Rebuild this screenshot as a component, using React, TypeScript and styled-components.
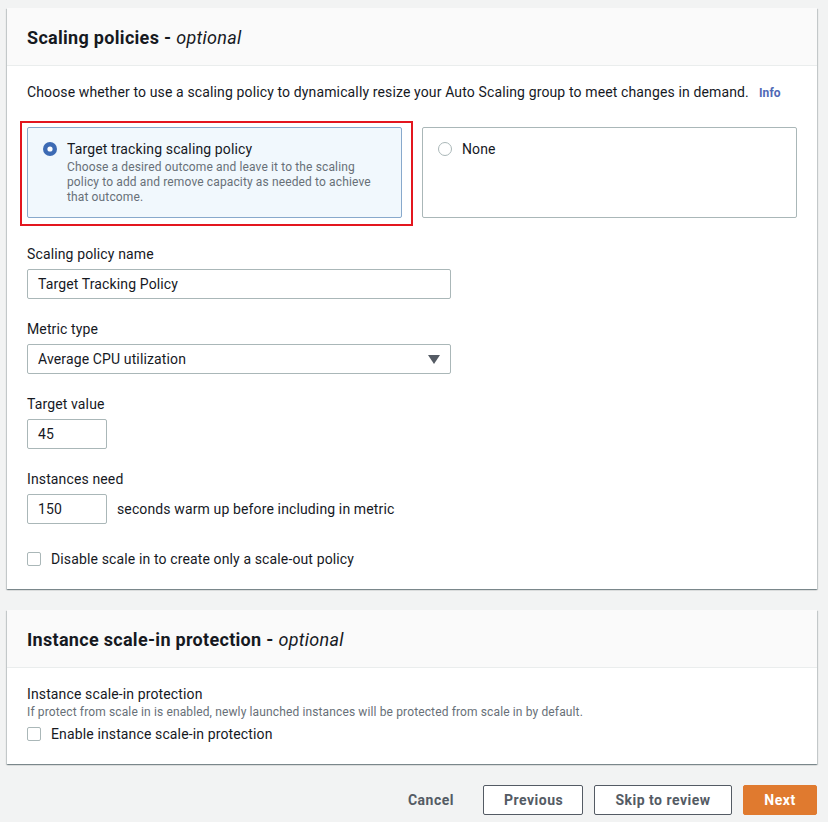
import React from "react";
import styled, { createGlobalStyle } from "styled-components";

const Global = createGlobalStyle`
  html, body { margin: 0; padding: 0; background: #f2f3f3; }
  body { font-family: Roboto, "Noto Sans", Arial, sans-serif; color: #16191f; letter-spacing: 0.13px; }
  * { box-sizing: border-box; }
`;

const Page = styled.div`
  width: 828px;
  padding: 8px 11px 9px 7px;
  display: flex;
  flex-direction: column;
  gap: 21px;
`;

const Panel = styled.section`
  background: #fff;
  box-shadow: 0 1px 1px 0 rgba(0, 28, 36, 0.3), 1px 1px 1px 0 rgba(0, 28, 36, 0.15),
    -1px 1px 1px 0 rgba(0, 28, 36, 0.15);
`;

const PanelHeader = styled.header`
  height: 58px;
  background: #fafafa;
  border-bottom: 1px solid #eaeded;
  display: flex;
  align-items: center;
  padding: 2px 20px 0;
`;

const PanelTitle = styled.h2`
  margin: 0;
  font-size: 18px;
  font-weight: 700;
  line-height: 24px;
  letter-spacing: 0.3px;
  color: #16191f;
  em { font-weight: 400; font-style: italic; }
`;

const PanelBody = styled.div<{ $top: number }>`
  padding: ${(p) => p.$top}px 20px 20px;
  display: flex;
  flex-direction: column;
`;

const Description = styled.p`
  margin: 0;
  font-size: 14px;
  line-height: 20px;
`;

const InfoLink = styled.span`
  margin-left: 10px;
  font-size: 12px;
  font-weight: 700;
  color: #4f68b5;
`;

const Cards = styled.div`
  margin-top: 24px;
  display: grid;
  grid-template-columns: 1fr 1fr;
  gap: 20px;
`;

const CardWrap = styled.div`
  position: relative;
`;

const Highlight = styled.div`
  position: absolute;
  top: -6px;
  left: -7px;
  right: -11px;
  bottom: -8px;
  border: 2px solid #e3161f;
  pointer-events: none;
`;

const Card = styled.div<{ $selected?: boolean }>`
  height: 91px;
  border: 1px solid ${(p) => (p.$selected ? "#88a9cc" : "#aab7b8")};
  background: ${(p) => (p.$selected ? "#f1f8fd" : "#fff")};
  border-radius: 2px;
  padding: 11px 15px;
  display: flex;
  gap: 10px;
`;

const RadioDot = styled.span`
  flex: none;
  margin-top: 3px;
  width: 14px;
  height: 14px;
  display: inline-flex;
`;

const CardText = styled.div`
  max-width: 308px;
  display: flex;
  flex-direction: column;
`;

const CardTitle = styled.span`
  font-size: 14px;
  line-height: 20px;
`;

const CardDesc = styled.span`
  margin-top: 1px;
  font-size: 12px;
  line-height: 15px;
  color: #687078;
`;

const Field = styled.div<{ $top: number }>`
  margin-top: ${(p) => p.$top}px;
  display: flex;
  flex-direction: column;
  gap: 5px;
`;

const Label = styled.span`
  font-size: 14px;
  line-height: 20px;
`;

const Input = styled.div<{ $w: number }>`
  width: ${(p) => p.$w}px;
  height: 30px;
  border: 1px solid #aab7b8;
  border-radius: 2px;
  padding: 0 10px;
  display: flex;
  align-items: center;
  justify-content: space-between;
  font-size: 14px;
  color: #16191f;
  background: #fff;
`;

const InlineRow = styled.div`
  display: flex;
  align-items: center;
  gap: 10px;
  font-size: 14px;
`;

const CheckRow = styled.label<{ $top: number }>`
  margin-top: ${(p) => p.$top}px;
  display: flex;
  align-items: center;
  gap: 10px;
  font-size: 14px;
  line-height: 20px;
`;

const Box = styled.span`
  width: 14px;
  height: 14px;
  border: 1px solid #aab7b8;
  border-radius: 2px;
  background: #fff;
`;

const SubText = styled.span`
  font-size: 12px;
  line-height: 16px;
  color: #687078;
`;

const Footer = styled.div`
  display: flex;
  justify-content: flex-end;
  align-items: center;
  gap: 11px;
`;

const Button = styled.button<{ $variant?: "link" | "normal" | "primary"; $w?: number }>`
  height: 30px;
  ${(p) => (p.$w ? `width: ${p.$w}px;` : "")}
  padding: 0 ${(p) => (p.$variant === "link" ? "17px" : "20px")} 1px;
  font-family: inherit;
  font-size: 14px;
  font-weight: 700;
  letter-spacing: 0.5px;
  border-radius: 2px;
  cursor: pointer;
  border: 1px solid
    ${(p) => (p.$variant === "link" ? "transparent" : p.$variant === "primary" ? "#e07a2f" : "#545b64")};
  background: ${(p) => (p.$variant === "primary" ? "#e07a2f" : p.$variant === "link" ? "transparent" : "#fff")};
  color: ${(p) => (p.$variant === "primary" ? "#fff" : "#545b64")};
`;

const SelectedRadio = () => (
  <svg width="14" height="14" viewBox="0 0 14 14">
    <circle cx="7" cy="7" r="7" fill="#3d6bb4" />
    <circle cx="7" cy="7" r="2.6" fill="#fff" />
  </svg>
);

const EmptyRadio = () => (
  <svg width="14" height="14" viewBox="0 0 14 14">
    <circle cx="7" cy="7" r="6.5" fill="#fff" stroke="#aab7b8" />
  </svg>
);

const Caret = () => (
  <svg width="12" height="9" viewBox="0 0 12 9">
    <path d="M0 0 H12 L6 9 Z" fill="#545b64" />
  </svg>
);

export default function App() {
  return (
    <>
      <Global />
      <Page>
        <Panel>
          <PanelHeader>
            <PanelTitle>
              Scaling policies - <em>optional</em>
            </PanelTitle>
          </PanelHeader>
          <PanelBody $top={16}>
            <Description>
              Choose whether to use a scaling policy to dynamically resize your Auto Scaling group to meet
              changes in demand.
              <InfoLink>Info</InfoLink>
            </Description>
            <Cards>
              <CardWrap>
                <Card $selected>
                  <RadioDot>
                    <SelectedRadio />
                  </RadioDot>
                  <CardText>
                    <CardTitle>Target tracking scaling policy</CardTitle>
                    <CardDesc>
                      Choose a desired outcome and leave it to the scaling policy to add and remove capacity as
                      needed to achieve that outcome.
                    </CardDesc>
                  </CardText>
                </Card>
                <Highlight />
              </CardWrap>
              <Card>
                <RadioDot>
                  <EmptyRadio />
                </RadioDot>
                <CardText>
                  <CardTitle>None</CardTitle>
                </CardText>
              </Card>
            </Cards>
            <Field $top={26}>
              <Label>Scaling policy name</Label>
              <Input $w={424}>Target Tracking Policy</Input>
            </Field>
            <Field $top={20}>
              <Label>Metric type</Label>
              <Input $w={424}>
                Average CPU utilization
                <Caret />
              </Input>
            </Field>
            <Field $top={20}>
              <Label>Target value</Label>
              <Input $w={80}>45</Input>
            </Field>
            <Field $top={20}>
              <Label>Instances need</Label>
              <InlineRow>
                <Input $w={80}>150</Input>
                seconds warm up before including in metric
              </InlineRow>
            </Field>
            <CheckRow $top={25}>
              <Box />
              Disable scale in to create only a scale-out policy
            </CheckRow>
          </PanelBody>
        </Panel>
        <Panel>
          <PanelHeader>
            <PanelTitle>
              Instance scale-in protection - <em>optional</em>
            </PanelTitle>
          </PanelHeader>
          <PanelBody $top={16}>
            <Label>Instance scale-in protection</Label>
            <SubText>If protect from scale in is enabled, newly launched instances will be protected from scale in by default.</SubText>
            <CheckRow $top={4}>
              <Box />
              Enable instance scale-in protection
            </CheckRow>
          </PanelBody>
        </Panel>
        <Footer>
          <Button $variant="link">Cancel</Button>
          <Button $w={100}>Previous</Button>
          <Button $w={138}>Skip to review</Button>
          <Button $variant="primary" $w={74}>Next</Button>
        </Footer>
      </Page>
    </>
  );
}
